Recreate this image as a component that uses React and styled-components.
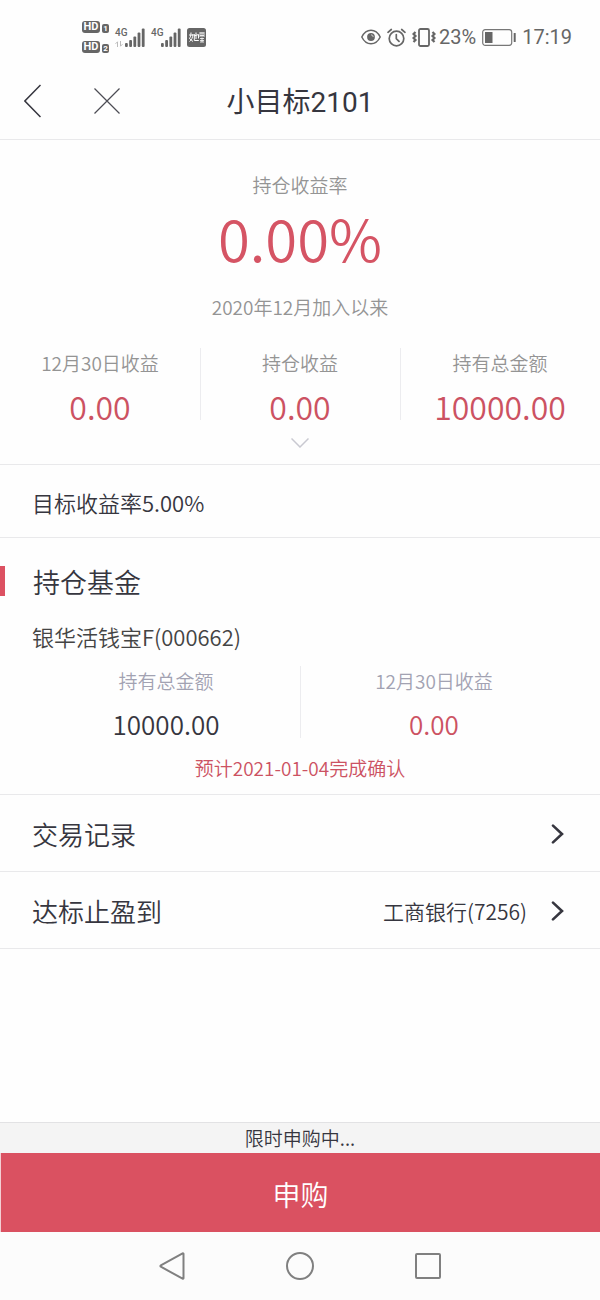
import React from 'react';
import styled, { createGlobalStyle } from 'styled-components';

const GlobalStyle = createGlobalStyle`
  *, *::before, *::after { box-sizing: border-box; }
  body {
    margin: 0;
    background: #fefefe;
    color: #36363f;
    font-family: "Noto Sans CJK SC", "Noto Sans", sans-serif;
    font-weight: 350;
  }
  h1, h2, h3, p, dl, dt, dd { margin: 0; font-weight: inherit; }
  button {
    margin: 0;
    padding: 0;
    border: 0;
    background: none;
    color: inherit;
    font: inherit;
    cursor: pointer;
  }
  svg { display: block; flex: none; }
`;

const Page = styled.div`
  min-height: 100vh;
  display: flex;
  flex-direction: column;
`;

const StatusBar = styled.div`
  display: flex;
  align-items: center;
  justify-content: space-between;
  padding: 21px 28px 9px 82px;
  color: #666;
  font-family: Roboto, sans-serif;
  font-size: 20px;
  font-weight: 400;
  line-height: 32px;
`;

const StatusGroup = styled.div`
  display: flex;
  align-items: center;
  gap: ${(p) => p.$gap}px;
`;

const SimList = styled.div`
  display: flex;
  flex-direction: column;
  gap: 8px;
`;

const Sim = styled.div`
  display: flex;
  align-items: flex-end;
  gap: 2px;
`;

const SimBadge = styled.span`
  width: ${(p) => (p.$small ? 7 : 18)}px;
  height: ${(p) => (p.$small ? 9 : 12)}px;
  border-radius: ${(p) => (p.$small ? 2 : 3)}px;
  background: #666;
  color: #fff;
  font-size: ${(p) => (p.$small ? 8 : 11)}px;
  font-weight: 700;
  line-height: ${(p) => (p.$small ? 9 : 12)}px;
  text-align: center;
`;

const Signal = styled.div`
  display: flex;
  align-items: flex-end;
`;

const Network = styled.div`
  width: 10px;
  height: 19px;
  display: flex;
  flex-direction: column;
  gap: 3px;
  font-size: 10px;
  font-weight: 500;
  line-height: 10px;
`;

const Header = styled.header`
  display: grid;
  grid-template-columns: 1fr auto 1fr;
  align-items: center;
  height: 78px;
  padding: 0 24px;
  border-bottom: 1px solid #e9e9eb;
`;

const HeaderActions = styled.div`
  display: flex;
  align-items: center;
  gap: 53px;
`;

const Title = styled.h1`
  padding-top: 4px;
  font-family: Roboto, "Noto Sans CJK SC", sans-serif;
  font-size: 28px;
  font-weight: 400;
  line-height: 40px;
`;

const Summary = styled.section`
  display: flex;
  flex-direction: column;
  align-items: center;
  padding: 31px 0 16px;
  border-bottom: 1px solid #e9e9eb;
`;

const Caption = styled.p`
  color: #949494;
  font-size: 19px;
  line-height: 28px;
`;

const Rate = styled.p`
  margin: 8px 0 26px;
  color: #d55464;
  font-size: 58px;
  line-height: 60px;
`;

const Stats = styled.dl`
  display: flex;
  align-self: stretch;
  align-items: flex-start;
  margin-top: ${(p) => p.$top}px;
`;

const Stat = styled.div`
  flex: 1 1 0;
  display: flex;
  flex-direction: column;
  gap: 14px;
  text-align: center;

  & + & {
    background: linear-gradient(#ececef, #ececef) left top / 1px ${(p) => p.$rule}px no-repeat;
  }
`;

const StatLabel = styled.dt`
  color: ${(p) => (p.$cool ? '#a2a2b2' : '#949494')};
  font-size: 19px;
  line-height: 30px;
`;

const StatValue = styled.dd`
  color: ${(p) => (p.$dark ? '#36363f' : '#cc5262')};
  font-size: ${(p) => (p.$large ? 32 : 26)}px;
  line-height: 28px;
`;

const ExpandButton = styled.button`
  margin-top: 18px;
`;

const Goal = styled.p`
  padding: 23px 32px 21px;
  border-bottom: 1px solid #e9e9eb;
  font-size: 22px;
  line-height: 28px;
`;

const Holdings = styled.section`
  padding: 28px 0 12px;
  border-bottom: 1px solid #e9e9eb;
`;

const SectionTitle = styled.h2`
  display: flex;
  gap: 28px;
  font-size: 27px;
  line-height: 32px;

  &::before {
    content: '';
    width: 5px;
    height: 30px;
    background: #dc5162;
  }
`;

const Fund = styled.div`
  padding: 24px 32px 0;
`;

const FundName = styled.h3`
  color: #444;
  font-size: 22px;
  line-height: 28px;
`;

const Confirmation = styled.p`
  margin-top: 16px;
  color: #cc5262;
  font-size: 19px;
  line-height: 28px;
  text-align: center;
`;

const Row = styled.button`
  display: flex;
  align-items: center;
  gap: 24px;
  padding: 22px 36px 21px 32px;
  border-bottom: 1px solid #e9e9eb;
  font-size: 26px;
  line-height: 32px;
  text-align: left;
`;

const RowLabel = styled.span`
  flex: 1;
  padding-top: 1px;
`;

const RowValue = styled.span`
  padding-top: 1px;
  font-size: 21px;
`;

const Footer = styled.footer`
  margin-top: auto;
  display: flex;
  flex-direction: column;
`;

const Notice = styled.p`
  border-top: 1px solid #e2e2e4;
  background: #f4f4f4;
  font-size: 19px;
  line-height: 30px;
  text-align: center;
`;

const BuyButton = styled.button`
  height: 79px;
  padding-top: 2px;
  border-left: 1px solid #f3cfd4;
  background: #da5161;
  color: #fff;
  font-size: 28px;
  line-height: 40px;
`;

const SystemNav = styled.nav`
  display: flex;
  align-items: center;
  justify-content: center;
  gap: 100px;
  height: 68px;
  background: #fcfcfc;
`;

const SignalBars = () => (
  <svg width="20" height="19" viewBox="0 0 20 19" fill="#666" aria-hidden="true">
    <rect x="0" y="15" width="2.8" height="4" rx="1" />
    <rect x="4.2" y="12" width="2.8" height="7" rx="1" />
    <rect x="8.4" y="8.5" width="2.8" height="10.5" rx="1" />
    <rect x="12.6" y="4.5" width="2.8" height="14.5" rx="1" />
    <rect x="16.8" y="0.5" width="2.8" height="18.5" rx="1" />
  </svg>
);

const DataArrows = () => (
  <svg width="8" height="6" viewBox="0 0 8 6" fill="none" stroke="#bbb" aria-hidden="true">
    <path d="M2.5 6V.8M.5 2.8l2-2M5.5 0v5.2M7.5 3.2l-2 2" />
  </svg>
);

const AppBadge = () => (
  <svg width="19" height="19" viewBox="0 0 19 19" aria-hidden="true">
    <rect width="19" height="19" rx="2.5" fill="#666" />
    <g fill="none" stroke="#fff" strokeWidth="1">
      <path d="M4 4.5c0 3-.6 4.5-1.5 6l3.5 3M6 6c-.3 3.5-1.3 6-3.5 7.5M2 7h4.5M7 8l4.5-1.5v4M9 4.5v6.5M7.3 6v6.500h4.5" />
      <path d="M13 5h4M13 7.5h4M15 4v5M13 4v5M17 4v5" strokeWidth=".8" />
      <path d="M13 10.5h4M13 12.5h4M13 14h4M15 9.5v4.5" strokeWidth=".8" />
    </g>
  </svg>
);

const EyeIcon = () => (
  <svg width="20" height="16" viewBox="0 0 20 16" fill="none" stroke="#666" strokeWidth="1.5" aria-hidden="true">
    <path d="M.8 8C3 3.5 6.2 1.2 10 1.2S17 3.5 19.2 8C17 12.5 13.8 14.8 10 14.8S3 12.5.8 8z" />
    <circle cx="10" cy="8" r="3.9" fill="#666" stroke="none" />
    <path d="M10 5.8A2.2 2.2 0 0 1 12.2 8" stroke="#ccc" strokeWidth="1" />
  </svg>
);

const AlarmIcon = () => (
  <svg width="19" height="19" viewBox="0 0 19 19" fill="none" stroke="#666" strokeWidth="1.7" strokeLinecap="round" aria-hidden="true">
    <circle cx="9.5" cy="10.5" r="7.3" />
    <path d="M9.3 6.5v4.2l2.7 2.7M1 4.3l3.3-2.8M18 4.3l-3.3-2.8" />
  </svg>
);

const VibrateIcon = () => (
  <svg width="24" height="19" viewBox="0 0 24 19" fill="none" stroke="#666" strokeWidth="1.8" aria-hidden="true">
    <rect x="7" y="1" width="10" height="17" rx="1.5" />
    <path d="M3.500 4L1.500 6l2 2-2 2 2 2-2 2M20.500 4l2 2-2 2 2 2-2 2 2 2" strokeWidth="2.2" />
  </svg>
);

const BatteryIcon = () => (
  <svg width="34" height="17" viewBox="0 0 34 17" aria-hidden="true">
    <rect x=".7" y=".7" width="29" height="15.6" rx="2.5" fill="none" stroke="#777" strokeWidth="1.2" />
    <rect x="3" y="3" width="7.5" height="11" fill="#666" />
    <rect x="31.7" y="4" width="2" height="9" rx=".6" fill="#666" />
  </svg>
);

const BackIcon = () => (
  <svg width="17" height="34" viewBox="0 0 17 34" fill="none" stroke="#36363f" strokeWidth="1.5" aria-hidden="true">
    <path d="M16.5 1L.9 17l15.6 16" />
  </svg>
);

const CloseIcon = () => (
  <svg width="26" height="26" viewBox="0 0 26 26" fill="none" stroke="#4c4c54" strokeWidth="1.2" aria-hidden="true">
    <path d="M.5.5l25 25M25.5.5l-25 25" />
  </svg>
);

const DownIcon = () => (
  <svg width="18" height="10" viewBox="0 0 18 10" fill="none" stroke="#c9c9d1" strokeWidth="1.5" aria-hidden="true">
    <path d="M.5.5L9 9l8.5-8.5" />
  </svg>
);

const RightIcon = () => (
  <svg width="13" height="20" viewBox="0 0 13 20" fill="none" stroke="#36363f" strokeWidth="2.6" strokeLinecap="round" aria-hidden="true">
    <path d="M2 1.6L11 10l-9 8.4" />
  </svg>
);

const navIcons = [
  ['返回', <path key="b" d="M25.5 1.8v24.4a.6.6 0 0 1-.9.5L2.8 14.7a.8.8 0 0 1 0-1.4L24.6 1.3a.6.6 0 0 1 .9.5z" />],
  ['主页', <circle key="h" cx="14" cy="14" r="13" />],
  ['最近任务', <rect key="r" x="2" y="2" width="24" height="24" rx="1" />],
];

export default function App() {
  return (
    <Page>
      <GlobalStyle />
      <StatusBar>
        <StatusGroup $gap={6}>
          <SimList>
            {[1, 2].map((n) => (
              <Sim key={n}>
                <SimBadge>HD</SimBadge>
                <SimBadge $small>{n}</SimBadge>
              </Sim>
            ))}
          </SimList>
          <Signal>
            <Network>4G<DataArrows /></Network>
            <SignalBars />
          </Signal>
          <Signal>
            <Network>4G</Network>
            <SignalBars />
          </Signal>
          <AppBadge />
        </StatusGroup>
        <StatusGroup $gap={6}>
          <EyeIcon />
          <AlarmIcon />
          <StatusGroup $gap={3}>
            <VibrateIcon />
            <span>23%</span>
          </StatusGroup>
          <BatteryIcon />
          <span>17:19</span>
        </StatusGroup>
      </StatusBar>

      <Header>
        <HeaderActions>
          <button type="button" aria-label="返回"><BackIcon /></button>
          <button type="button" aria-label="关闭"><CloseIcon /></button>
        </HeaderActions>
        <Title>小目标2101</Title>
      </Header>

      <Summary>
        <Caption>持仓收益率</Caption>
        <Rate>0.00%</Rate>
        <Caption>2020年12月加入以来</Caption>
        <Stats $top={27}>
          <Stat $rule={70}>
            <StatLabel>12月30日收益</StatLabel>
            <StatValue $large>0.00</StatValue>
          </Stat>
          <Stat $rule={70}>
            <StatLabel>持仓收益</StatLabel>
            <StatValue $large>0.00</StatValue>
          </Stat>
          <Stat $rule={70}>
            <StatLabel>持有总金额</StatLabel>
            <StatValue $large>10000.00</StatValue>
          </Stat>
        </Stats>
        <ExpandButton type="button" aria-label="展开"><DownIcon /></ExpandButton>
      </Summary>

      <Goal>目标收益率5.00%</Goal>

      <Holdings>
        <SectionTitle>持仓基金</SectionTitle>
        <Fund>
          <FundName>银华活钱宝F(000662)</FundName>
          <Stats $top={16}>
            <Stat $rule={76}>
              <StatLabel $cool>持有总金额</StatLabel>
              <StatValue $dark>10000.00</StatValue>
            </Stat>
            <Stat $rule={76}>
              <StatLabel $cool>12月30日收益</StatLabel>
              <StatValue>0.00</StatValue>
            </Stat>
          </Stats>
          <Confirmation>预计2021-01-04完成确认</Confirmation>
        </Fund>
      </Holdings>

      <Row type="button">
        <RowLabel>交易记录</RowLabel>
        <RightIcon />
      </Row>
      <Row type="button">
        <RowLabel>达标止盈到</RowLabel>
        <RowValue>工商银行(7256)</RowValue>
        <RightIcon />
      </Row>

      <Footer>
        <Notice>限时申购中...</Notice>
        <BuyButton type="button">申购</BuyButton>
        <SystemNav>
          {navIcons.map(([label, shape]) => (
            <button key={label} type="button" aria-label={label}>
              <svg width="28" height="28" viewBox="0 0 28 28" fill="none" stroke="#808080" strokeWidth="2">
                {shape}
              </svg>
            </button>
          ))}
        </SystemNav>
      </Footer>
    </Page>
  );
}
